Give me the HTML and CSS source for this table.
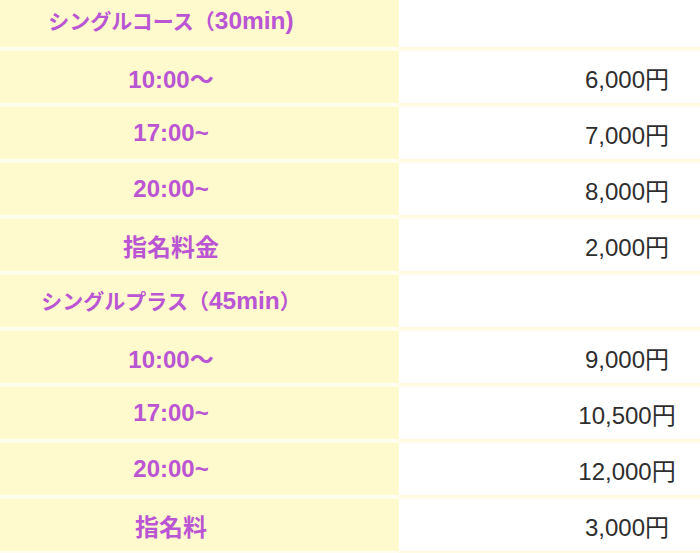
FILE: index.html
```html
<!DOCTYPE html>
<html lang="ja">
<head>
<meta charset="utf-8">
<link rel="stylesheet" href="styles.css">
</head>
<body>
<div class="price-table">
  <div class="row row-first"><div class="label heading">シングルコース（<span class="en">30min)</span></div><div class="price"></div></div>
  <div class="row"><div class="label">10:00〜</div><div class="price">6,000円</div></div>
  <div class="row"><div class="label">17:00~</div><div class="price">7,000円</div></div>
  <div class="row"><div class="label">20:00~</div><div class="price">8,000円</div></div>
  <div class="row"><div class="label">指名料金</div><div class="price">2,000円</div></div>
  <div class="row"><div class="label heading">シングルプラス（<span class="en">45min</span>）</div><div class="price"></div></div>
  <div class="row"><div class="label">10:00〜</div><div class="price">9,000円</div></div>
  <div class="row"><div class="label">17:00~</div><div class="price">10,500円</div></div>
  <div class="row"><div class="label">20:00~</div><div class="price">12,000円</div></div>
  <div class="row"><div class="label">指名料</div><div class="price">3,000円</div></div>
</div>
</body>
</html>
```
FILE: styles.css
```css
html, body {
  margin: 0;
  padding: 0;
  background: #fff;
  overflow: hidden;
}
body {
  font-family: "Liberation Sans", "Noto Sans CJK JP", sans-serif;
}
.price-table {
  width: 700px;
}
.row {
  display: grid;
  grid-template-columns: 399px 301px;
}
.label, .price {
  height: 52px;
  display: flex;
  align-items: center;
  justify-content: center;
  font-size: 24px;
  white-space: nowrap;
}
.label {
  background: #fffacd;
  color: #ba55d3;
  font-weight: bold;
  padding-right: 57px;
  border-bottom: 4px solid #fffeee;
}
.label.heading {
  font-size: 21px;
  align-items: baseline;
  padding-top: 0;
}
.label.heading .en {
  font-size: 24.5px;
}
.price {
  background: #fff;
  color: #2e2e2e;
  padding-left: 155px;
  border-bottom: 4px solid #fffbe3;
}
.row .label.heading {
  line-height: 52px;
}
.row-first .label,
.row-first .price {
  height: 47px;
}
.row-first .label.heading {
  line-height: 42px;
}
```
